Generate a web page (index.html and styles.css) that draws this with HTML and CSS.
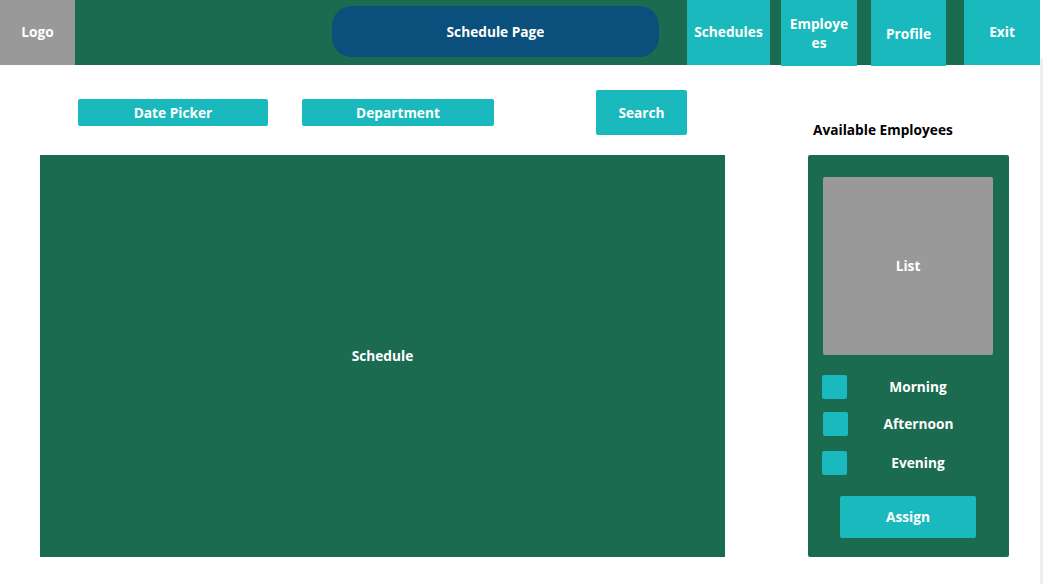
FILE: index.html
```html
<!DOCTYPE html>
<html lang="en">
<head>
<meta charset="utf-8">
<title>Schedule Page</title>
<link rel="stylesheet" href="styles.css">
</head>
<body>
<div class="page">
  <div class="main">
    <header class="header">
      <div class="logo">Logo</div>
      <div class="title-pill">Schedule Page</div>
      <div class="nav nav-schedules">Schedules</div>
      <div class="nav nav-employees">Employees</div>
      <div class="nav nav-profile">Profile</div>
      <div class="nav nav-exit">Exit</div>
    </header>
    <div class="content">
      <div class="left">
        <div class="toolbar">
          <div class="field field-date">Date Picker</div>
          <div class="field field-dept">Department</div>
          <div class="search">Search</div>
        </div>
        <div class="schedule">Schedule</div>
      </div>
      <div class="right">
        <div class="avail-label">Available Employees</div>
        <div class="panel">
          <div class="list">List</div>
          <div class="shift shift-1"><span class="check"></span><span class="shift-label">Morning</span></div>
          <div class="shift shift-2"><span class="check"></span><span class="shift-label">Afternoon</span></div>
          <div class="shift shift-3"><span class="check"></span><span class="shift-label">Evening</span></div>
          <div class="assign">Assign</div>
        </div>
      </div>
    </div>
  </div>
  <div class="edge"></div>
</div>
</body>
</html>
```
FILE: styles.css
```css
html, body {
  margin: 0;
  padding: 0;
  background: #ffffff;
}
body {
  font-family: "Open Sans", "Noto Sans", sans-serif;
  font-weight: 700;
  font-size: 13.7px;
  color: #ffffff;
}
.page {
  display: flex;
  width: 1043px;
  height: 584px;
  overflow: hidden;
}
.main {
  width: 1040px;
  flex: none;
}
.edge {
  width: 3px;
  margin-top: 58px;
  background: #efefef;
  flex: none;
}
.header {
  display: flex;
  align-items: flex-start;
  height: 65px;
  background: #1b6b50;
}
.logo {
  width: 75px;
  height: 65px;
  padding-bottom: 2px;
  box-sizing: border-box;
  background: #999999;
  display: flex;
  align-items: center;
  justify-content: center;
  flex: none;
}
.title-pill {
  margin-left: 257px;
  margin-top: 6px;
  width: 327px;
  height: 51px;
  border-radius: 20px;
  background: #0b4f7c;
  display: flex;
  align-items: center;
  justify-content: center;
  flex: none;
}
.nav {
  background: #1ab9bd;
  display: flex;
  align-items: center;
  justify-content: center;
  text-align: center;
  flex: none;
  box-sizing: border-box;
}
.nav-schedules { margin-left: 28px; width: 83px; height: 65px; padding-bottom: 3px; }
.nav-employees {
  margin-left: 11px;
  width: 76px;
  height: 66px;
  padding: 0 7px;
  word-break: break-all;
  line-height: 19px;
}
.nav-profile { margin-left: 14px; width: 75px; height: 66px; }
.nav-exit { margin-left: 18px; width: 76px; height: 65px; padding-bottom: 3px; }

.content {
  display: flex;
  align-items: flex-start;
}
.left {
  padding-left: 40px;
  width: 685px;
  flex: none;
}
.toolbar {
  display: flex;
  align-items: flex-start;
  height: 90px;
  padding-left: 38px;
}
.field {
  margin-top: 34px;
  height: 27px;
  background: #1ab9bd;
  border-radius: 2px;
  display: flex;
  align-items: center;
  justify-content: center;
}
.field-date { width: 190px; }
.field-dept { width: 192px; margin-left: 34px; }
.search {
  margin-top: 25px;
  margin-left: 102px;
  width: 91px;
  height: 45px;
  background: #1ab9bd;
  border-radius: 2px;
  display: flex;
  align-items: center;
  justify-content: center;
}
.schedule {
  height: 402px;
  box-sizing: border-box;
  padding-bottom: 2px;
  background: #1b6b50;
  display: flex;
  align-items: center;
  justify-content: center;
}
.right {
  margin-left: 83px;
  width: 201px;
  flex: none;
}
.avail-label {
  color: #000000;
  padding-top: 56px;
  padding-left: 5px;
  line-height: 18px;
  box-sizing: border-box;
  height: 90px;
}
.panel {
  background: #1b6b50;
  height: 402px;
  box-sizing: border-box;
  padding-top: 22px;
  border-radius: 2px;
}
.list {
  margin-left: 15px;
  width: 170px;
  height: 178px;
  box-sizing: border-box;
  padding-bottom: 2px;
  background: #999999;
  border-radius: 2px;
  display: flex;
  align-items: center;
  justify-content: center;
}
.shift {
  display: flex;
  align-items: center;
  height: 24px;
  padding-left: 14px;
  padding-right: 20px;
}
.shift-1 { margin-top: 20px; }
.shift-2 { margin-top: 13px; padding-left: 15px; }
.shift-3 { margin-top: 15px; }
.check {
  width: 25px;
  height: 24px;
  background: #1ab9bd;
  border-radius: 2px;
  flex: none;
}
.shift-label {
  flex: 1;
  text-align: center;
  padding-bottom: 2px;
}
.assign {
  margin-top: 21px;
  margin-left: 32px;
  width: 136px;
  height: 42px;
  box-sizing: border-box;
  padding-bottom: 2px;
  background: #1ab9bd;
  border-radius: 2px;
  display: flex;
  align-items: center;
  justify-content: center;
}
```
